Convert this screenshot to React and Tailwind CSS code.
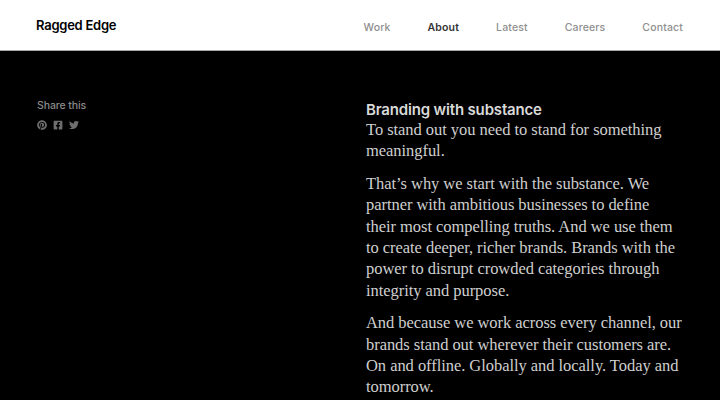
import { FaPinterest, FaFacebookSquare, FaTwitter } from "react-icons/fa"

const navLinks = [
    { label: 'Work' },
    { label: 'About', active: true },
    { label: 'Latest' },
    { label: 'Careers' },
    { label: 'Contact' },
]

export default function App(){
    return (
        <div className="h-[400px] overflow-hidden bg-black font-['Inter',sans-serif]">
            <header className="flex h-[51px] items-center justify-between border-b border-[#a8a8a8] bg-white pl-9 pr-[37px]">
                <div className="pt-[1px] text-[13px] font-semibold tracking-[-0.25px] text-black">Ragged Edge</div>
                <nav className="flex gap-[37px] pt-[5px] text-[10.5px] tracking-[0.15px] font-medium">
                    {navLinks.map(link => (
                        <a key={link.label} className={link.active ? 'text-[#333333] font-semibold' : 'text-[#8f8f8f]'}>
                            {link.label}
                        </a>
                    ))}
                </nav>
            </header>
            <main className="flex pl-[37px] pt-[49px]">
                <div className="w-[329px] shrink-0">
                    <div className="-mt-[2px] text-[10.5px] font-medium tracking-[-0.1px] text-[#8a8a8a]">Share this</div>
                    <div className="mt-[6px] flex items-center gap-[6px] text-[10px] text-[#6e6e6e]">
                        <FaPinterest />
                        <FaFacebookSquare />
                        <FaTwitter />
                    </div>
                </div>
                <div className="w-[317px] font-['Liberation_Serif',serif] text-[16.5px] leading-[21.4px] tracking-[-0.05px] text-[#cfcfcf]">
                    <h2 className="font-['Inter',sans-serif] text-[15px] font-semibold leading-[19px] tracking-[-0.17px] text-[#d9d9d9]">Branding with substance</h2>
                    <p className="mb-[11px]">To stand out you need to stand for something meaningful.</p>
                    <p className="mb-[11px]">That’s why we start with the substance. We partner with ambitious businesses to define their most compelling truths. And we use them to create deeper, richer brands. Brands with the power to disrupt crowded categories through integrity and purpose.</p>
                    <p>And because we work across every channel, our brands stand out wherever their customers are. On and offline. Globally and locally. Today and tomorrow.</p>
                </div>
            </main>
        </div>
    )
}
